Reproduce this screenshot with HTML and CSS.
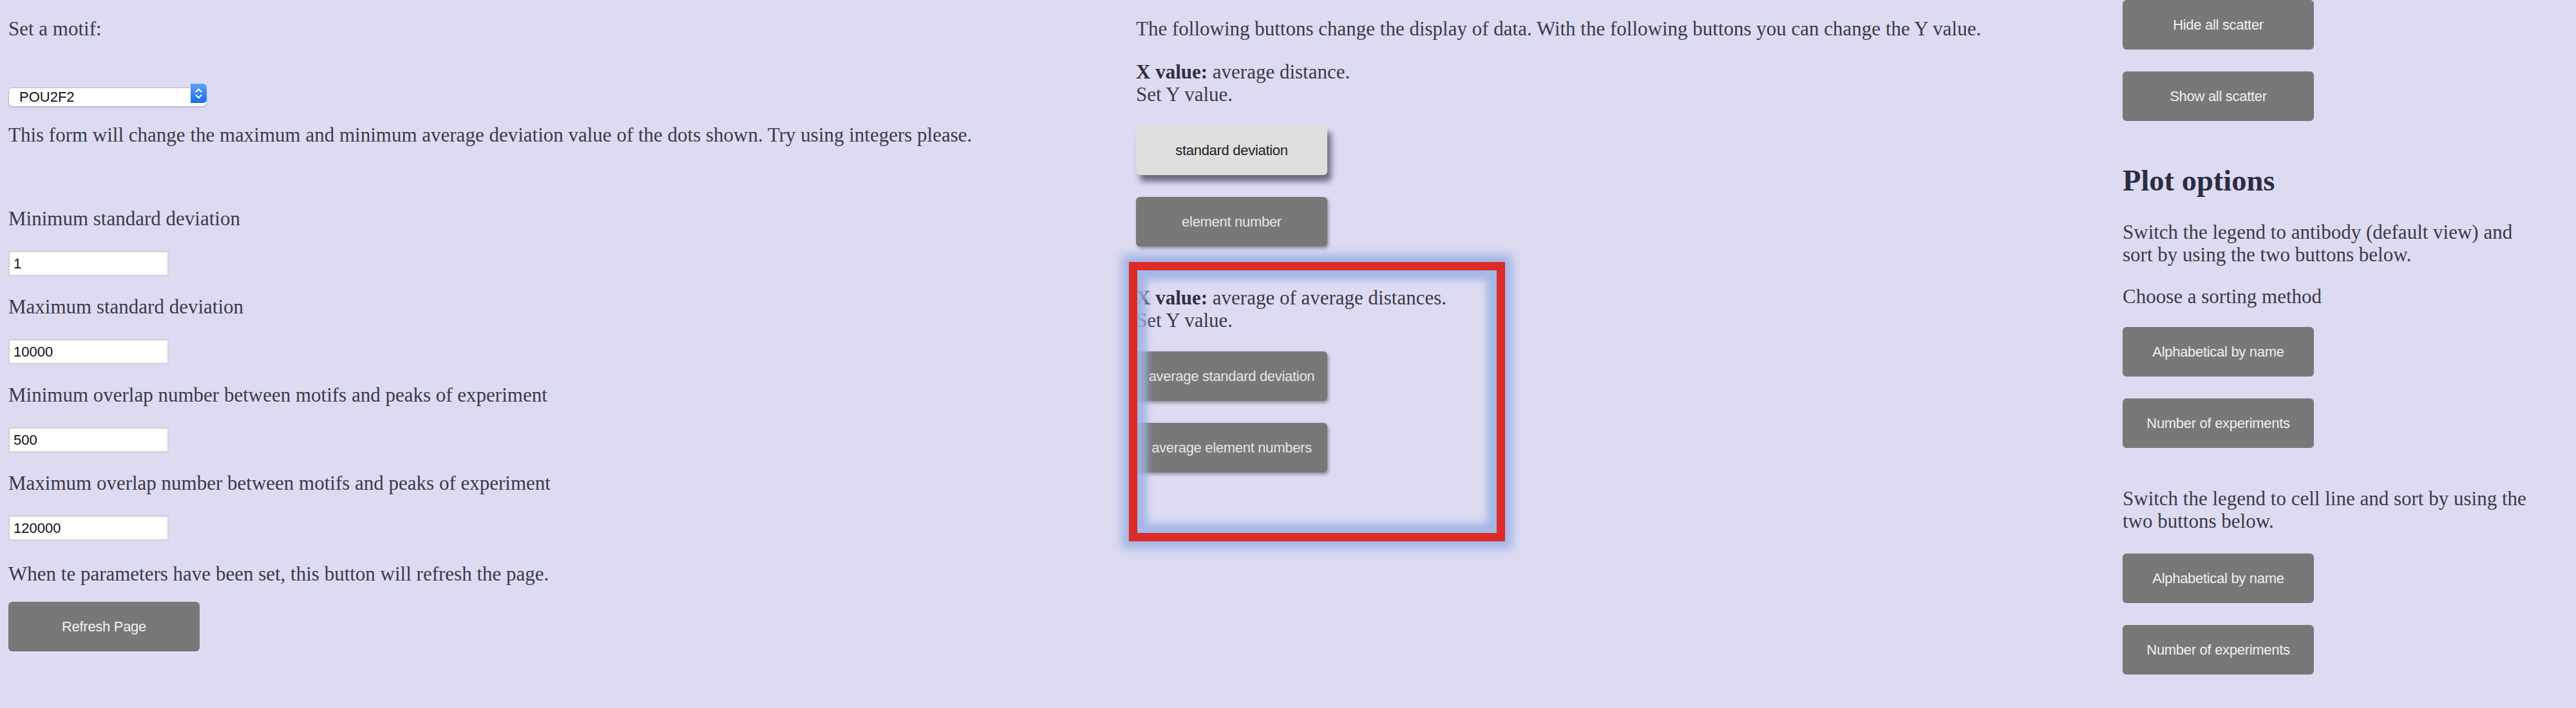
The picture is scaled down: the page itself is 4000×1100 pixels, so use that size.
FILE: index.html
```html
<!DOCTYPE html>
<html lang="en">
<head>
<meta charset="utf-8">
<title>Motif plot controls</title>
<link rel="stylesheet" href="styles.css">
</head>
<body>
<div class="page">
  <section class="col col-left">
    <p class="t motif-label">Set a motif:</p>
    <div class="select-wrap">
      <select class="motif"><option>POU2F2</option></select>
      <span class="select-arrow"><svg width="25" height="30" viewBox="0 0 25 30"><polyline points="8.5,12.5 12.5,8.5 16.5,12.5" fill="none" stroke="#fff" stroke-width="2" stroke-linecap="round" stroke-linejoin="round"/><polyline points="8.5,18 12.5,22 16.5,18" fill="none" stroke="#fff" stroke-width="2" stroke-linecap="round" stroke-linejoin="round"/></svg></span>
    </div>
    <p class="t intro">This form will change the maximum and minimum average deviation value of the dots shown. Try using integers please.</p>
    <div class="fields">
      <div class="field"><label class="t">Minimum standard deviation</label><input class="num" type="text" value="1"></div>
      <div class="field"><label class="t">Maximum standard deviation</label><input class="num" type="text" value="10000"></div>
      <div class="field"><label class="t">Minimum overlap number between motifs and peaks of experiment</label><input class="num" type="text" value="500"></div>
      <div class="field"><label class="t">Maximum overlap number between motifs and peaks of experiment</label><input class="num" type="text" value="120000"></div>
    </div>
    <p class="t note">When te parameters have been set, this button will refresh the page.</p>
    <div class="refresh-row">
      <button class="btn">Refresh Page</button>
    </div>
  </section>

  <section class="col col-mid">
    <p class="t mid-intro">The following buttons change the display of data. With the following buttons you can change the Y value.</p>
    <div class="group group-first">
      <p class="t"><b>X value:</b> average distance.<br>Set Y value.</p>
      <div class="btns">
        <button class="btn btn-active">standard deviation</button>
        <button class="btn btn-raised">element number</button>
      </div>
    </div>
    <div class="group group-second">
      <p class="t"><b>X value:</b> average of average distances.<br>Set Y value.</p>
      <div class="btns">
        <button class="btn btn-raised">average standard deviation</button>
        <button class="btn btn-raised">average element numbers</button>
      </div>
      <span class="highlight"></span>
    </div>
  </section>

  <section class="col col-right">
    <div class="btns">
      <button class="btn">Hide all scatter</button>
      <button class="btn">Show all scatter</button>
    </div>
    <h2 class="plot-title">Plot options</h2>
    <p class="t legend-a">Switch the legend to antibody (default view) and sort by using the two buttons below.</p>
    <p class="t sort-label">Choose a sorting method</p>
    <div class="btns sort-a">
      <button class="btn">Alphabetical by name</button>
      <button class="btn">Number of experiments</button>
    </div>
    <p class="t legend-b">Switch the legend to cell line and sort by using the two buttons below.</p>
    <div class="btns sort-b">
      <button class="btn">Alphabetical by name</button>
      <button class="btn">Number of experiments</button>
    </div>
  </section>
</div>
</body>
</html>
```

FILE: styles.css
```css
html, body {
  margin: 0;
  padding: 0;
}
body {
  background: #dddbf1;
  color: #3a3a4a;
  font-family: "Liberation Serif", "Times New Roman", serif;
  font-size: 31px;
  overflow: hidden;
}
.page {
  display: grid;
  grid-template-columns: 1751px 1532px 640px;
  padding-left: 13px;
  align-items: start;
}
.col {
  display: flex;
  flex-direction: column;
  align-items: flex-start;
}
.t {
  margin: 0;
  line-height: 35px;
  font-size: 31px;
}
b { color: #2f2f40; }

/* buttons */
.btn {
  box-sizing: border-box;
  width: 297px;
  height: 77px;
  margin: 0;
  padding: 0;
  border: none;
  border-radius: 6px;
  background: #787878;
  color: #f0f0f0;
  font-family: "Liberation Sans", Arial, sans-serif;
  font-size: 22px;
  letter-spacing: -0.3px;
}
.btns {
  display: flex;
  flex-direction: column;
  gap: 34px;
}
.btn-active {
  background: #dedede;
  color: #222;
  box-shadow: 6px 10px 10px rgba(45, 45, 65, 0.65);
}
.btn-raised {
  box-shadow: 2px 3px 5px rgba(0, 0, 0, 0.35);
  color: #e6e6e6;
}

/* left column */
.motif-label { margin-top: 27px; }
.select-wrap {
  position: relative;
  margin-top: 68px;
  width: 308px;
  height: 30px;
}
.motif {
  -webkit-appearance: none;
  appearance: none;
  box-sizing: border-box;
  width: 308px;
  height: 30px;
  margin: 0;
  padding: 0 0 0 16px;
  background: #fff;
  border: 1px solid #b9b9c4;
  border-radius: 6px;
  box-shadow: 0 1px 2px rgba(0,0,0,0.15);
  font-family: "Liberation Sans", Arial, sans-serif;
  font-size: 22px;
  color: #111;
}
.select-arrow {
  position: absolute;
  right: 0;
  top: 0;
  width: 25px;
  height: 30px;
  border-radius: 0 6px 6px 0;
  background: linear-gradient(#5aa2f7, #1c6ce6);
  display: flex;
}
.intro { margin-top: 32px; }
.fields {
  margin-top: 95px;
  display: flex;
  flex-direction: column;
  gap: 30px;
}
.field {
  display: flex;
  flex-direction: column;
  align-items: flex-start;
  gap: 33px;
}
.num {
  box-sizing: border-box;
  width: 249px;
  height: 39px;
  margin: 0;
  padding: 0 0 0 6px;
  background: #fff;
  border: 2px solid #d0d0d8;
  border-radius: 0;
  font-family: "Liberation Sans", Arial, sans-serif;
  font-size: 22px;
  color: #111;
}
.note { margin-top: 34px; }
.refresh-row { margin-top: 26px; }

/* middle column */
.mid-intro { margin-top: 27px; }
.group {
  display: flex;
  flex-direction: column;
  align-items: flex-start;
  gap: 31px;
}
.group-first { margin-top: 32px; }
.group-second {
  margin-top: 62px;
  position: relative;
}
.highlight {
  position: absolute;
  left: -11px;
  top: -38px;
  width: 584px;
  height: 434px;
  box-sizing: border-box;
  border: 13px solid #dc2c27;
  box-shadow:
    0 0 14px 11px rgba(158, 178, 228, 0.95),
    inset 0 0 12px 15px rgba(158, 178, 228, 0.9);
  pointer-events: none;
}

/* right column */
.plot-title {
  margin: 66px 0 0;
  font-size: 46.5px;
  line-height: 53px;
  font-weight: bold;
  color: #2c2c44;
}
.legend-a { margin-top: 36px; }
.sort-label { margin-top: 30px; }
.sort-a { margin-top: 30px; }
.legend-b { margin-top: 61px; }
.sort-b { margin-top: 33px; }
```
